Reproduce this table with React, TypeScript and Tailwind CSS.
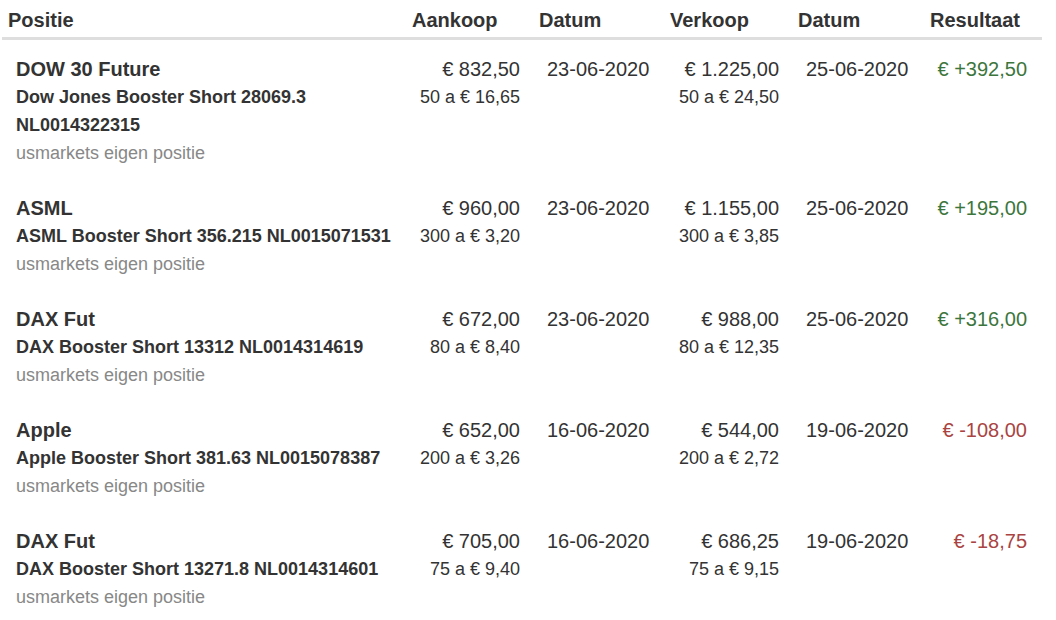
import React from "react";

type Trade = {
  title: string;
  product: string;
  buy: string;
  buyQty: string;
  buyDate: string;
  sell: string;
  sellQty: string;
  sellDate: string;
  result: string;
  positive: boolean;
};

const trades: Trade[] = [
  {
    title: "DOW 30 Future",
    product: "Dow Jones Booster Short 28069.3 NL0014322315",
    buy: "€ 832,50",
    buyQty: "50 a € 16,65",
    buyDate: "23-06-2020",
    sell: "€ 1.225,00",
    sellQty: "50 a € 24,50",
    sellDate: "25-06-2020",
    result: "€ +392,50",
    positive: true,
  },
  {
    title: "ASML",
    product: "ASML Booster Short 356.215 NL0015071531",
    buy: "€ 960,00",
    buyQty: "300 a € 3,20",
    buyDate: "23-06-2020",
    sell: "€ 1.155,00",
    sellQty: "300 a € 3,85",
    sellDate: "25-06-2020",
    result: "€ +195,00",
    positive: true,
  },
  {
    title: "DAX Fut",
    product: "DAX Booster Short 13312 NL0014314619",
    buy: "€ 672,00",
    buyQty: "80 a € 8,40",
    buyDate: "23-06-2020",
    sell: "€ 988,00",
    sellQty: "80 a € 12,35",
    sellDate: "25-06-2020",
    result: "€ +316,00",
    positive: true,
  },
  {
    title: "Apple",
    product: "Apple Booster Short 381.63 NL0015078387",
    buy: "€ 652,00",
    buyQty: "200 a € 3,26",
    buyDate: "16-06-2020",
    sell: "€ 544,00",
    sellQty: "200 a € 2,72",
    sellDate: "19-06-2020",
    result: "€ -108,00",
    positive: false,
  },
  {
    title: "DAX Fut",
    product: "DAX Booster Short 13271.8 NL0014314601",
    buy: "€ 705,00",
    buyQty: "75 a € 9,40",
    buyDate: "16-06-2020",
    sell: "€ 686,25",
    sellQty: "75 a € 9,15",
    sellDate: "19-06-2020",
    result: "€ -18,75",
    positive: false,
  },
];

const App: React.FC = () => {
  return (
    <div className="w-[1056px] h-[620px] overflow-hidden bg-white font-['Liberation_Sans',Arial,sans-serif] text-[#333]">
      <table className="ml-[2px] w-[1040px] table-fixed border-collapse">
        <colgroup>
          <col className="w-[402px]" />
          <col className="w-[127px]" />
          <col className="w-[131px]" />
          <col className="w-[128px]" />
          <col className="w-[132px]" />
          <col className="w-[120px]" />
        </colgroup>
        <thead>
          <tr className="border-b-[3px] border-[#dedede] text-left text-[20px] font-bold leading-[28px]">
            <th className="pl-[6px] pt-[6px] pb-[3px]">Positie</th>
            <th className="pl-2 pt-[6px] pb-[3px]">Aankoop</th>
            <th className="pl-2 pt-[6px] pb-[3px]">Datum</th>
            <th className="pl-2 pt-[6px] pb-[3px]">Verkoop</th>
            <th className="pl-2 pt-[6px] pb-[3px]">Datum</th>
            <th className="pl-2 pt-[6px] pb-[3px]">Resultaat</th>
          </tr>
        </thead>
        <tbody>
          {trades.map((t, i) => (
            <tr key={i} className="align-top leading-[28px]">
              <td className="pl-[14px] pr-[4px] pt-[15px] pb-[12px]">
                <div className="text-[20px] font-bold">{t.title}</div>
                <div className="text-[18px] font-bold">{t.product}</div>
                <div className="text-[18px] text-[#888]">usmarkets eigen positie</div>
              </td>
              <td className="pr-[11px] pt-[15px] pb-[12px] text-right">
                <div className="text-[20px]">{t.buy}</div>
                <div className="text-[18px]">{t.buyQty}</div>
              </td>
              <td className="pl-4 pt-[15px] pb-[12px] text-[20px]">{t.buyDate}</td>
              <td className="pr-[11px] pt-[15px] pb-[12px] text-right">
                <div className="text-[20px]">{t.sell}</div>
                <div className="text-[18px]">{t.sellQty}</div>
              </td>
              <td className="pl-4 pt-[15px] pb-[12px] text-[20px]">{t.sellDate}</td>
              <td
                className={`pr-[15px] pt-[15px] pb-[12px] text-right text-[20px] ${
                  t.positive ? "text-[#3c763d]" : "text-[#a94442]"
                }`}
              >
                {t.result}
              </td>
            </tr>
          ))}
        </tbody>
      </table>
    </div>
  );
};

export default App;
